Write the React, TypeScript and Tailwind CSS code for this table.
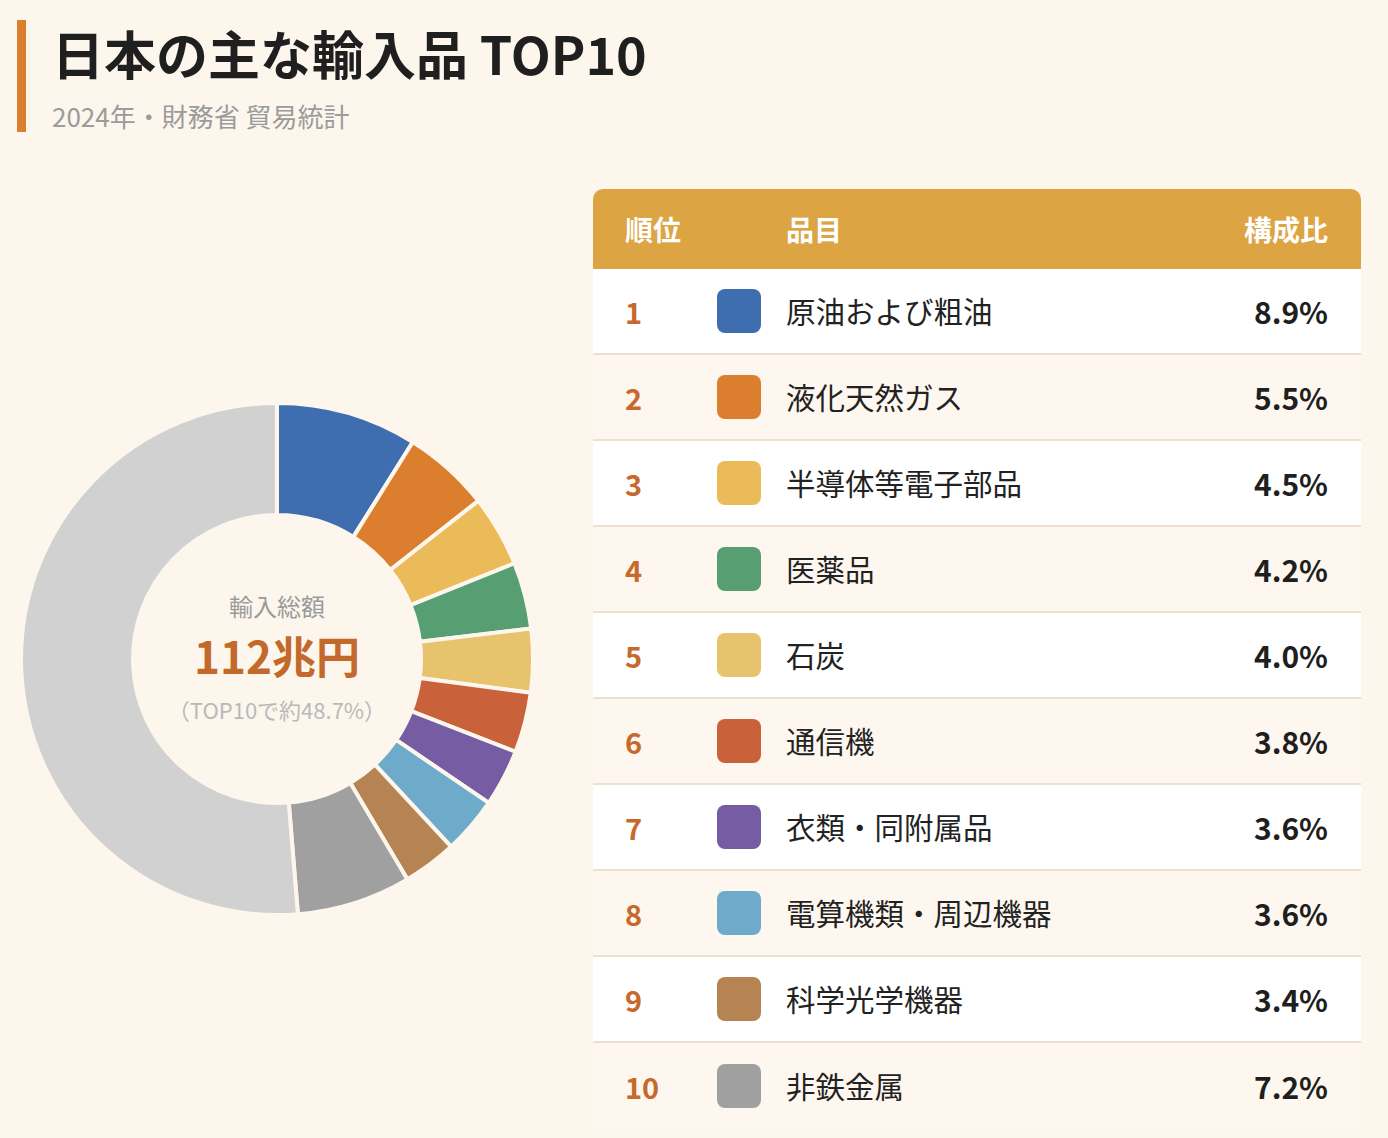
import React from "react";

const items = [
  { rank: 1, name: "原油および粗油", pct: 8.9, color: "#3f6eb0" },
  { rank: 2, name: "液化天然ガス", pct: 5.5, color: "#db7f2e" },
  { rank: 3, name: "半導体等電子部品", pct: 4.5, color: "#ebbb5a" },
  { rank: 4, name: "医薬品", pct: 4.2, color: "#579e72" },
  { rank: 5, name: "石炭", pct: 4.0, color: "#e8c36e" },
  { rank: 6, name: "通信機", pct: 3.8, color: "#c9623b" },
  { rank: 7, name: "衣類・同附属品", pct: 3.6, color: "#765da3" },
  { rank: 8, name: "電算機類・周辺機器", pct: 3.6, color: "#6eaac9" },
  { rank: 9, name: "科学光学機器", pct: 3.4, color: "#b58452" },
  { rank: 10, name: "非鉄金属", pct: 7.2, color: "#a0a0a0" },
];

const BG = "#fcf6ed";

// donut slice path (angles in degrees, 0 = top, clockwise)
function arc(cx: number, cy: number, r0: number, r1: number, a0: number, a1: number) {
  const p = (r: number, a: number) => {
    const t = ((a - 90) * Math.PI) / 180;
    return `${(cx + r * Math.cos(t)).toFixed(2)} ${(cy + r * Math.sin(t)).toFixed(2)}`;
  };
  const large = a1 - a0 > 180 ? 1 : 0;
  return `M ${p(r1, a0)} A ${r1} ${r1} 0 ${large} 1 ${p(r1, a1)} L ${p(r0, a1)} A ${r0} ${r0} 0 ${large} 0 ${p(r0, a0)} Z`;
}

const Donut: React.FC = () => {
  const slices: { d: string; color: string }[] = [];
  let acc = 0;
  items.forEach((it) => {
    const a0 = (acc / 100) * 360;
    acc += it.pct;
    const a1 = (acc / 100) * 360;
    slices.push({ d: arc(258, 258, 144, 256, a0, a1), color: it.color });
  });
  slices.push({ d: arc(258, 258, 144, 256, (acc / 100) * 360, 359.99), color: "#d1d1d1" });

  return (
    <div className="relative w-[516px] h-[516px]">
      <svg width="516" height="516" viewBox="0 0 516 516">
        {slices.map((s, i) => (
          <path key={i} d={s.d} fill={s.color} stroke={BG} strokeWidth={4} strokeLinejoin="round" />
        ))}
      </svg>
      <div className="absolute inset-0 flex flex-col items-center justify-center">
        <div className="text-[24px] leading-none text-[#9a9a9a] mt-[-4px]">輸入総額</div>
        <div className="text-[44px] leading-none font-bold text-[#c4692c] mt-[15px]">112兆円</div>
        <div className="text-[22px] leading-none text-[#b9b9b9] mt-[21px]">（TOP10で約48.7%）</div>
      </div>
    </div>
  );
};

export default function App() {
  return (
    <div className="min-h-screen bg-[#fcf6ed] font-['Noto_Sans_CJK_JP','Noto_Sans',sans-serif] pl-[17px] pr-[27px] pt-[20px] pb-[10px]">
      {/* Title */}
      <div className="border-l-[9px] border-[#d97f2e] pl-[26px] h-[112px] flex flex-col">
        <h1 className="text-[52px] leading-none font-bold text-[#1f1f1f] mt-[7px]">
          日本の主な輸入品 TOP10
        </h1>
        <p className="text-[26px] leading-none text-[#9b9b9b] mt-[24px]">2024年・財務省 貿易統計</p>
      </div>

      <div className="flex items-center mt-[57px]">
        <div className="w-[576px] shrink-0 pl-[2px]">
          <Donut />
        </div>

        {/* Table */}
        <div className="w-[768px]">
          <div className="h-[80px] bg-[#dca443] rounded-t-[10px] flex items-center text-white font-bold text-[28px] leading-none px-[32px]">
            <div className="w-[161px]">順位</div>
            <div className="flex-1">品目</div>
            <div className="pr-[1px]">構成比</div>
          </div>
          {items.map((it, i) => (
            <div
              key={it.rank}
              className={`h-[86px] flex items-center pl-[32px] pr-[33px] ${
                i % 2 === 0 ? "bg-white" : "bg-[#fef7ef]"
              } ${i < items.length - 1 ? "border-b-2 border-[#ede0cd]" : ""}`}
            >
              <div className="w-[92px] text-[29px] font-bold text-[#c7692c] leading-none">{it.rank}</div>
              <div className="w-[44px] h-[44px] rounded-[8px] shrink-0" style={{ backgroundColor: it.color }} />
              <div className="flex-1 pl-[25px] text-[29.5px] text-[#222] leading-none">{it.name}</div>
              <div className="text-[30px] font-bold text-[#1f1f1f] leading-none">{it.pct.toFixed(1)}%</div>
            </div>
          ))}
        </div>
      </div>
    </div>
  );
}
